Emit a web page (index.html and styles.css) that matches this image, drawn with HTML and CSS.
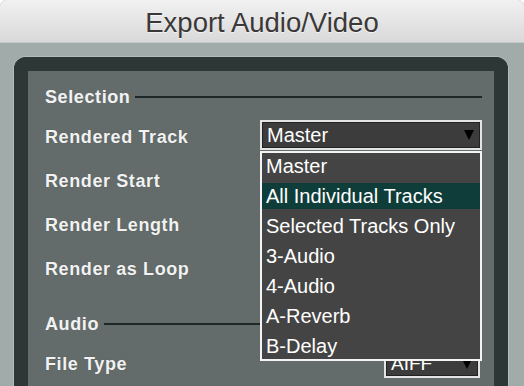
FILE: index.html
```html
<!DOCTYPE html>
<html lang="en">

<head>
	<meta charset="UTF-8">
	<title>Export Audio/Video</title>
	<link rel="stylesheet" href="styles.css">
</head>

<body>
	<div class="window">
		<div class="titlebar">Export Audio/Video</div>

		<div class="sheet">
			<div class="frame">
				<div class="section-head">
					<span>Selection</span>
				</div>

				<div class="row">
					<label>Rendered Track</label>
					<div class="control">
						<div class="select">
							<span>Master</span>
							<span class="arrow"></span>
						</div>
						<ul class="menu">
							<li>Master</li>
							<li class="active">All Individual Tracks</li>
							<li>Selected Tracks Only</li>
							<li>3-Audio</li>
							<li>4-Audio</li>
							<li>A-Reverb</li>
							<li>B-Delay</li>
						</ul>
					</div>
				</div>

				<div class="row">
					<label>Render Start</label>
				</div>

				<div class="row">
					<label>Render Length</label>
				</div>

				<div class="row">
					<label>Render as Loop</label>
				</div>

				<div class="section-head audio">
					<span>Audio</span>
				</div>

				<div class="row">
					<label>File Type</label>
					<div class="control">
						<div class="select small">
							<span>AIFF</span>
							<span class="arrow"></span>
						</div>
					</div>
				</div>
			</div>
		</div>
	</div>
</body>

</html>
```

FILE: styles.css
```css
*,
*::before,
*::after {
	box-sizing: border-box
}

html,
body {
	margin: 0;
	background: #ffffff;
}

body {
	width: 524px;
	height: 386px;
	overflow: hidden;
	font-family: "Liberation Sans", Arial, sans-serif;
}

.window {
	height: 386px;
	border-radius: 6px 6px 0 0;
	overflow: hidden;
	background: #a1aba9;
}

.titlebar {
	height: 43px;
	background: linear-gradient(#f1f1f1, #d9d9d9);
	border-bottom: 1px solid #c3cac9;
	color: #3b3838;
	font-size: 27.5px;
	text-align: center;
	line-height: 45px;
	text-shadow: 0 1px 0 rgba(255, 255, 255, 0.6);
}

.sheet {
	padding: 14px 16px 0 14px;
}

.frame {
	height: 360px;
	border: 14px solid #2c3736;
	border-bottom: none;
	border-radius: 12px 12px 0 0;
	background: #636c6b;
	box-shadow: 0 0 0 1px #b3bcba;
	padding: 8px 12px 0 17px;
}

.section-head {
	height: 36px;
	display: flex;
	align-items: center;
	gap: 5px;
	color: #f2f2f2;
	font-weight: bold;
	font-size: 18px;
	letter-spacing: 0.6px;
}

.section-head::after {
	content: "";
	flex: 1;
	height: 2px;
	background: #1f2828;
}

.section-head.audio {
	margin-top: 15px;
}

.row {
	height: 44px;
	display: flex;
	align-items: center;
}

.row label {
	width: 215px;
	color: #f2f2f2;
	font-weight: bold;
	font-size: 18px;
	letter-spacing: 0.6px;
	text-shadow: 0 0 1px rgba(0, 0, 0, 0.3);
}

.control {
	position: relative;
	width: 222px;
	align-self: flex-start;
	margin-top: 5px;
}

.select {
	height: 30px;
	border: 2px solid #e4e4e4;
	box-shadow: inset 0 0 0 1px #222;
	background: #3c3c3c;
	color: #ffffff;
	font-size: 20px;
	display: flex;
	align-items: center;
	justify-content: space-between;
	padding: 0 6px 0 5px;
}

.select.small {
	width: 96px;
	height: 28px;
	margin-left: 124px;
	margin-top: 3px;
	font-size: 19px;
}

.arrow {
	width: 0;
	height: 0;
	border-left: 5px solid transparent;
	border-right: 5px solid transparent;
	border-top: 10px solid #000;
}

.menu {
	position: absolute;
	top: 31px;
	left: 0;
	width: 222px;
	margin: 0;
	padding: 0;
	list-style: none;
	background: #454444;
	border: 2px solid #f4f4f4;
	z-index: 2;
}

.menu li {
	height: 26px;
	margin-bottom: 4px;
	line-height: 26px;
	padding-left: 4px;
	color: #ffffff;
	font-size: 20px;
	white-space: nowrap;
}

.menu li:last-child {
	margin-bottom: 0;
}

.menu li.active {
	background: #0f3d3a;
}
```
